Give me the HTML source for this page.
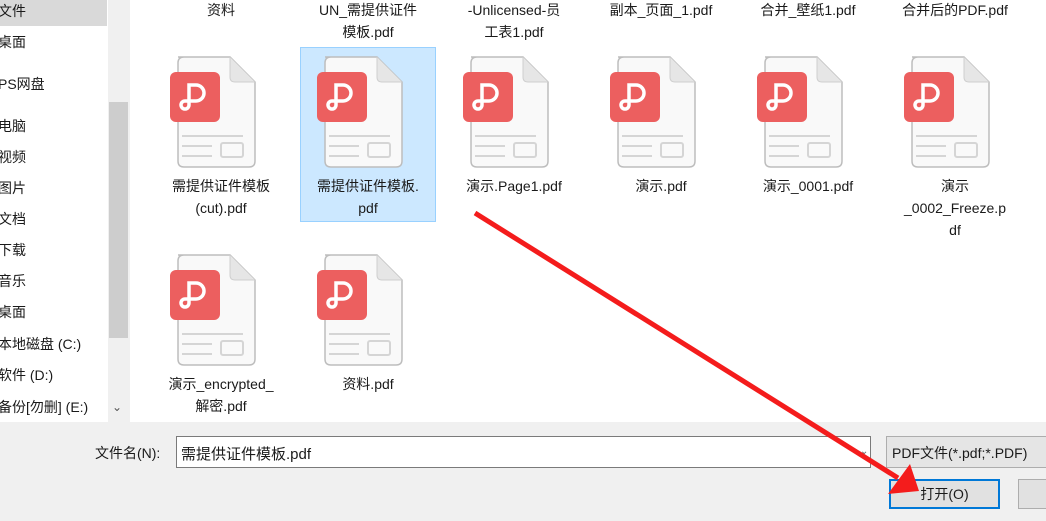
<!DOCTYPE html><html><head><meta charset="utf-8"><style>
*{margin:0;padding:0;box-sizing:border-box}
body{width:1046px;height:521px;overflow:hidden;background:#f0f0f0;font-family:"Liberation Sans","Noto Sans CJK SC",sans-serif;font-size:14px;color:#1a1a1a;position:relative}
.a{position:absolute}
.nav{left:0;top:0;width:108px;height:422px;background:#fff}
.nav div{position:absolute;left:-2px;white-space:nowrap}
.lbl{position:absolute;width:140px;text-align:center;line-height:22px}
</style></head><body>
<div class="a nav">
<div style="top:0;left:0;width:107px;height:26px;background:#d9d9d9"></div>
<div style="top:1px">文件</div><div style="top:32px">桌面</div><div style="top:74px">PS网盘</div>
<div style="top:116px">电脑</div><div style="top:147px">视频</div><div style="top:178px">图片</div>
<div style="top:209px">文档</div><div style="top:240px">下载</div><div style="top:271px">音乐</div>
<div style="top:302px">桌面</div><div style="top:334px">本地磁盘 (C:)</div><div style="top:365px">软件 (D:)</div>
<div style="top:397px">备份[勿删] (E:)</div>
</div>
<div class="a" style="left:108px;top:0;width:21px;height:422px;background:#f0f0f0"></div>
<div class="a" style="left:109px;top:102px;width:19px;height:236px;background:#cdcdcd"></div>
<div class="a" style="left:112px;top:400px;font-size:12px;color:#555">⌄</div>
<div class="a" style="left:130px;top:0;width:916px;height:422px;background:#fff"></div>
<div class="a" style="left:300px;top:47px;width:136px;height:175px;background:#cce8ff;border:1px solid #99d1ff"></div>
<svg class="a" style="left:0;top:0" width="1046" height="422">
<defs><g id="ic">
<path d="M8 0H60L85 25V104Q85 110 79 110H14Q8 110 8 104V6Q8 0 14 0Z" fill="#f9f9f9" stroke="#bdbdbd" stroke-width="1.5"/>
<path d="M60 0V20Q60 25 65 25H85" fill="#e6e6e6" stroke="#cfcfcf"/>
<rect x="0" y="15" width="50" height="50" rx="6" fill="#ec5f5f"/>
<path d="M19 48V28h7a8 8 0 0 1 0 16h-4M19 48a4 4 0 1 1-4-4h8" fill="none" stroke="#fff" stroke-width="3.5" stroke-linecap="round"/>
<path d="M12 79H73M12 89H42M12 99H42" stroke="#d5d5d5" stroke-width="2"/>
<rect x="51" y="86" width="22" height="14" rx="2" fill="none" stroke="#d5d5d5" stroke-width="2"/>
</g></defs>
<use href="#ic" x="170" y="57"/><use href="#ic" x="317" y="57"/><use href="#ic" x="463" y="57"/>
<use href="#ic" x="610" y="57"/><use href="#ic" x="757" y="57"/><use href="#ic" x="904" y="57"/>
<use href="#ic" x="170" y="255"/><use href="#ic" x="317" y="255"/>
</svg>
<div class="lbl" style="left:151px;top:-1px">资料</div>
<div class="lbl" style="left:298px;top:-1px">UN_需提供证件<br>模板.pdf</div>
<div class="lbl" style="left:444px;top:-1px">-Unlicensed-员<br>工表1.pdf</div>
<div class="lbl" style="left:591px;top:-1px">副本_页面_1.pdf</div>
<div class="lbl" style="left:738px;top:-1px">合并_壁纸1.pdf</div>
<div class="lbl" style="left:885px;top:-1px">合并后的PDF.pdf</div>
<div class="lbl" style="left:151px;top:175px">需提供证件模板<br>(cut).pdf</div>
<div class="lbl" style="left:298px;top:175px">需提供证件模板.<br>pdf</div>
<div class="lbl" style="left:444px;top:175px">演示.Page1.pdf</div>
<div class="lbl" style="left:591px;top:175px">演示.pdf</div>
<div class="lbl" style="left:738px;top:175px">演示_0001.pdf</div>
<div class="lbl" style="left:885px;top:175px">演示<br>_0002_Freeze.p<br>df</div>
<div class="lbl" style="left:151px;top:373px">演示_encrypted_<br>解密.pdf</div>
<div class="lbl" style="left:298px;top:373px">资料.pdf</div>
<div class="a" style="left:95px;top:443px">文件名(N):</div>
<div class="a" style="left:176px;top:436px;width:695px;height:32px;background:#fff;border:1px solid #7a7a7a;padding:6px 4px;font-size:15px">需提供证件模板.pdf</div>
<div class="a" style="left:860px;top:446px;font-size:10px;color:#666">⌄</div>
<div class="a" style="left:886px;top:436px;width:170px;height:32px;background:#e5e5e5;border:1px solid #adadad;padding:6px 5px">PDF文件(*.pdf;*.PDF)</div>
<div class="a" style="left:889px;top:479px;width:111px;height:30px;background:#e1e1e1;border:2px solid #0078d7;text-align:center;line-height:26px">打开(O)</div>
<div class="a" style="left:1018px;top:479px;width:40px;height:30px;background:#e1e1e1;border:1px solid #adadad"></div>
<svg class="a" style="left:0;top:0" width="1046" height="521">
<line x1="475" y1="213" x2="898" y2="478" stroke="#f41c1c" stroke-width="5"/>
<polygon points="919,491 888,494 910,464" fill="#f41c1c"/>
</svg>
</body></html>
